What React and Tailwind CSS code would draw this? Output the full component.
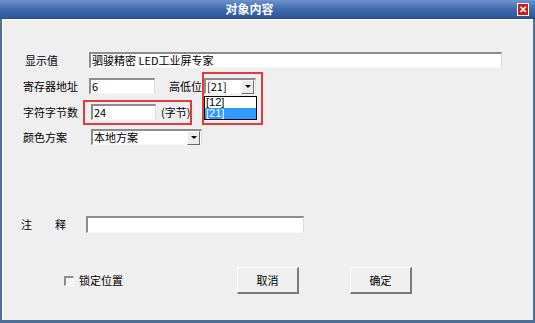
import React from 'react';

const font = { fontFamily: '"Noto Sans CJK SC", "Liberation Sans", sans-serif' };

function Arrow() {
  return (
    <div className="flex h-[14px] w-[13px] items-center justify-center border border-t-white border-l-white border-b-[#6b6b6b] border-r-[#6b6b6b] bg-[#ececec]">
      <div className="h-0 w-0 border-x-[3px] border-t-[3px] border-x-transparent border-t-black" />
    </div>
  );
}

function TextBox({ className, children }) {
  return (
    <div
      className={`flex h-[16px] items-center whitespace-nowrap border-t-2 border-l-2 border-b border-r border-t-[#8c8c8c] border-l-[#8c8c8c] border-b-[#f8f8f8] border-r-[#dcdcdc] bg-white pl-[1px] text-[11px] leading-none text-black ${className}`}
    >
      {children}
    </div>
  );
}

function Select({ className, value }) {
  return (
    <TextBox className={`justify-between pr-[1px] ${className}`}>
      <span>{value}</span>
      <Arrow />
    </TextBox>
  );
}

function Label({ className, children }) {
  return <div className={`whitespace-nowrap text-[11px] leading-none text-black ${className}`}>{children}</div>;
}

function Button({ children }) {
  return (
    <button className="flex h-[27px] w-[62px] items-center justify-center border border-t-white border-l-white border-b-2 border-r-2 border-b-[#7a7a7a] border-r-[#7a7a7a] bg-[#f0f0f0] text-[11px] leading-none text-black">
      {children}
    </button>
  );
}

export default function App() {
  return (
    <div className="flex h-[323px] w-[535px] flex-col bg-[#4f6f9a]" style={font}>
      <div className="flex h-[19px] items-center border-b border-[#2a4c80] bg-gradient-to-b from-[#6d93cc] via-[#3f6cb0] to-[#2c5797]">
        <div className="flex-1 text-center text-[12px] font-bold leading-none text-white">对象内容</div>
        <div className="ml-[18px] mr-[6px] flex h-[13px] w-[12px] items-center justify-center border border-white bg-[#cc1a1a] text-[10px] font-bold leading-none text-white">
          ✕
        </div>
      </div>
      <div className="relative mx-[2px] mb-[3px] flex flex-1 flex-col border-l border-t border-white bg-[#efefef]">
        <div className="mt-[32px] flex h-[16px] items-center">
          <Label className="ml-[22px] w-[64px]">显示值</Label>
          <TextBox className="w-[413px]">驷骏精密 LED工业屏专家</TextBox>
        </div>
        <div className="mt-[10px] flex h-[16px] items-center">
          <Label className="ml-[20px] w-[66px]">寄存器地址</Label>
          <TextBox className="w-[66px]">6</TextBox>
          <Label className="ml-[14px] w-[35px]">高低位</Label>
          <div className="relative">
            <Select className="w-[52px]" value="[21]" />
            <div className="absolute left-0 top-[18px] w-[53px] border border-black bg-white font-['Liberation_Sans',sans-serif] text-[11px] leading-[11px]">
              <div className="pl-[1px] text-black">[12]</div>
              <div className="bg-[#3399ff] pl-[1px] text-white">[21]</div>
            </div>
            <div className="absolute left-[-2px] top-[-6px] h-[53px] w-[61px] border-2 border-[#e23b3b]" />
          </div>
        </div>
        <div className="mt-[10px] flex h-[16px] items-center">
          <Label className="ml-[20px] w-[68px]">字符字节数</Label>
          <div className="relative flex items-center">
            <TextBox className="w-[65px]">24</TextBox>
            <Label className="ml-[5px]">(字节)</Label>
            <div className="absolute left-[-8px] top-[-4px] h-[25px] w-[109px] border-2 border-[#e23b3b]" />
          </div>
        </div>
        <div className="mt-[9px] flex h-[16px] items-center">
          <Label className="ml-[20px] w-[68px]">颜色方案</Label>
          <Select className="w-[111px]" value="本地方案" />
        </div>
        <div className="mt-[71px] flex h-[17px] items-center">
          <Label className="ml-[18px] flex w-[65px] gap-[23px]">
            <span>注</span>
            <span>释</span>
          </Label>
          <TextBox className="h-[17px] w-[218px]" />
        </div>
        <div className="mt-[34px] flex items-center">
          <div className="ml-[61px] h-[10px] w-[10px] border-t-2 border-l-2 border-b border-r border-t-[#8c8c8c] border-l-[#8c8c8c] border-b-white border-r-white bg-[#f4f4f4]" />
          <Label className="ml-[5px] w-[44px]">锁定位置</Label>
          <div className="ml-[114px] flex gap-[51px]">
            <Button>取消</Button>
            <Button>确定</Button>
          </div>
        </div>
      </div>
    </div>
  );
}
